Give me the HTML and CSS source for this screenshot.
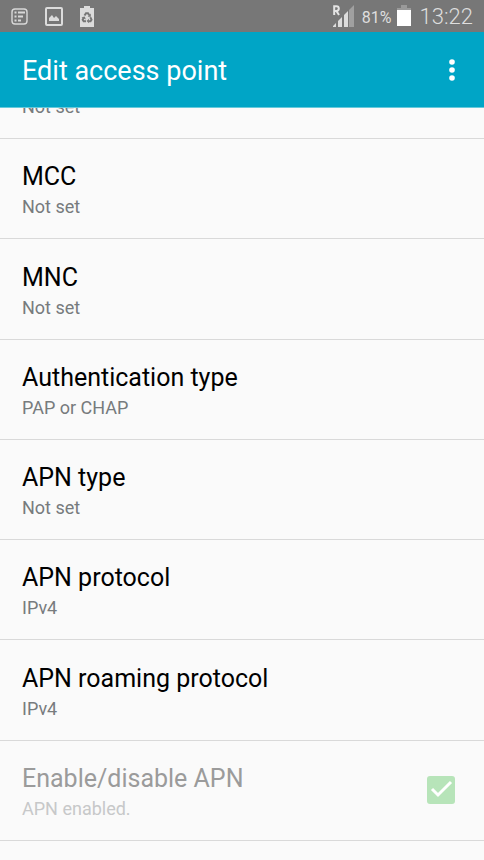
FILE: index.html
```html
<!DOCTYPE html>
<html lang="en">
<head>
<meta charset="utf-8">
<meta name="viewport" content="width=device-width, initial-scale=1">
<title>Edit access point</title>
<link rel="stylesheet" href="styles.css">
</head>
<body>
<div class="status">
  <div class="status-left">
    <svg width="17" height="17" viewBox="0 0 17 17" fill="none" stroke="#d8d8d8" aria-hidden="true">
      <rect x="1" y="1" width="15" height="15" rx="3" stroke-width="1.4"/>
      <path d="M3.5 4.5h2M7 4.5h7M3.5 8.5h2M7 8.5h5M3.5 12.5h2M7 12.5h3" stroke-width="2"/>
    </svg>
    <svg width="18" height="19" viewBox="0 0 18 19" aria-hidden="true">
      <rect x="1" y="1" width="16" height="17" rx="1" fill="none" stroke="#dcdcdc" stroke-width="2"/>
      <path d="M4 14v-3l3-3 2 3 2-2 3 3v2z" fill="#dcdcdc"/>
    </svg>
    <svg width="14" height="21" viewBox="0 0 14 21" aria-hidden="true">
      <path d="M4 0h6v2h4v19H0V2h4z" fill="#dcdcdc"/>
      <g fill="none" stroke="#777" stroke-width="2">
        <path d="M4.5 9.5L6 7.2h2l1.3 2.1M3.8 11.5L2.7 13.6l1 1.6H6M10.3 11.3l1.2 2.3-1 1.6H8.5"/>
      </g>
      <path d="M10.8 7.5v3.2H7.7zM1.5 11.2l3.3-.6 1 3zM8.9 12.8v4.5l-2.3-2.2z" fill="#777"/>
    </svg>
  </div>
  <div class="status-right">
    <svg width="23" height="24" viewBox="0 0 23 24" aria-hidden="true">
      <path d="M1 23v-1l3-3v4zM6 23v-6l4-4v10zM12 23V11l4-4v16z" fill="#dcdcdc"/>
      <path d="M17 23V6l5-5v22z" fill="#a0a0a0"/>
      <path d="M2.2 11V2.2H4.4Q6.8 2.2 6.8 4.6T4.4 7H2.2M4.4 7L7 11" fill="none" stroke="#e4e4e4" stroke-width="2"/>
    </svg>
    <span class="percent">81%</span>
    <svg width="14" height="22" viewBox="0 0 14 22" aria-hidden="true">
      <path d="M4 0h6v3h4v2H0V3h4z" fill="#999"/>
      <path d="M0 5h14v16H0z" fill="#fff"/>
    </svg>
    <span class="clock">13:22</span>
  </div>
</div>
<header class="bar">
  <h1>Edit access point</h1>
  <button class="more" type="button" aria-label="More options">
    <svg width="6" height="24" viewBox="0 0 6 24" fill="#fff" aria-hidden="true"><circle cx="3" cy="4" r="2.8"/><circle cx="3" cy="12" r="2.8"/><circle cx="3" cy="20" r="2.8"/></svg>
  </button>
</header>
<main class="list">
  <div class="row row-cut"><span class="value">Not set</span></div>
  <button class="row" type="button"><span class="name">MCC</span><span class="value">Not set</span></button>
  <button class="row" type="button"><span class="name">MNC</span><span class="value">Not set</span></button>
  <button class="row" type="button"><span class="name">Authentication type</span><span class="value">PAP or CHAP</span></button>
  <button class="row" type="button"><span class="name">APN type</span><span class="value">Not set</span></button>
  <button class="row" type="button"><span class="name">APN protocol</span><span class="value">IPv4</span></button>
  <button class="row" type="button"><span class="name">APN roaming protocol</span><span class="value">IPv4</span></button>
  <div class="row row-check">
    <label class="texts" for="apn-enabled"><span class="name">Enable/disable APN</span><span class="value">APN enabled.</span></label>
    <span class="check">
      <input type="checkbox" id="apn-enabled" checked disabled>
      <svg viewBox="0 0 28 28" aria-hidden="true"><path d="M5 13l6 6L24 6" fill="none" stroke="#fff" stroke-width="3"/></svg>
    </span>
  </div>
</main>
</body>
</html>
```
FILE: styles.css
```css
* {
  box-sizing: border-box;
}

body {
  display: flex;
  flex-direction: column;
  min-height: 100vh;
  margin: 0;
  background: #fafafa;
  color: #000;
  font-family: Roboto, "Liberation Sans", sans-serif;
}

svg {
  display: block;
}

.status {
  display: flex;
  flex: none;
  justify-content: space-between;
  align-items: center;
  height: 32px;
  padding: 0 11px;
  background: #777;
  color: #dedede;
}

.status-left {
  display: flex;
  align-items: center;
  gap: 17px;
}

.status-right {
  display: flex;
  align-items: center;
}

.percent {
  margin: 2px 5px 0 7px;
  font-size: 16px;
}

.clock {
  margin-left: 9px;
  font-size: 22px;
  font-weight: 300;
}

.bar {
  display: flex;
  flex: none;
  justify-content: space-between;
  align-items: center;
  height: 76px;
  padding: 0 22px;
  border-bottom: 1px solid #66cadb;
  background: #00a5c6;
  color: #fff;
}

h1 {
  margin: 0;
  padding-top: 3px;
  font-size: 27px;
  font-weight: 400;
  line-height: 32px;
}

.more {
  padding: 0 7px;
  border: 0;
  background: none;
}

.list {
  display: flex;
  flex: 1;
  flex-direction: column;
  padding-bottom: 19px;
}

.row {
  display: flex;
  flex: 1;
  flex-direction: column;
  justify-content: flex-end;
  align-items: flex-start;
  min-height: 96px;
  padding: 0 22px 19px;
  border: 0;
  border-bottom: 1px solid #d9d9d9;
  background: none;
  color: inherit;
  font: inherit;
  text-align: left;
}

.row-cut {
  flex: none;
  height: 31px;
  min-height: 0;
  overflow: hidden;
}

.name {
  font-size: 25px;
  line-height: 36px;
}

.value {
  color: #777b7d;
  font-size: 18px;
  line-height: 24px;
}

.row-check {
  flex-direction: row;
  justify-content: space-between;
  align-items: flex-end;
  padding-right: 29px;
}

.texts {
  display: flex;
  flex-direction: column;
}

.row-check .name {
  color: #9b9b9b;
}

.row-check .value {
  color: #c7c8c9;
}

.check {
  position: relative;
  width: 28px;
  height: 28px;
  margin-bottom: 17px;
}

.check input {
  display: block;
  width: 28px;
  height: 28px;
  margin: 0;
  border-radius: 3px;
  background: #b7e4b9;
  appearance: none;
}

.check svg {
  position: absolute;
  inset: 0;
  pointer-events: none;
}
```
